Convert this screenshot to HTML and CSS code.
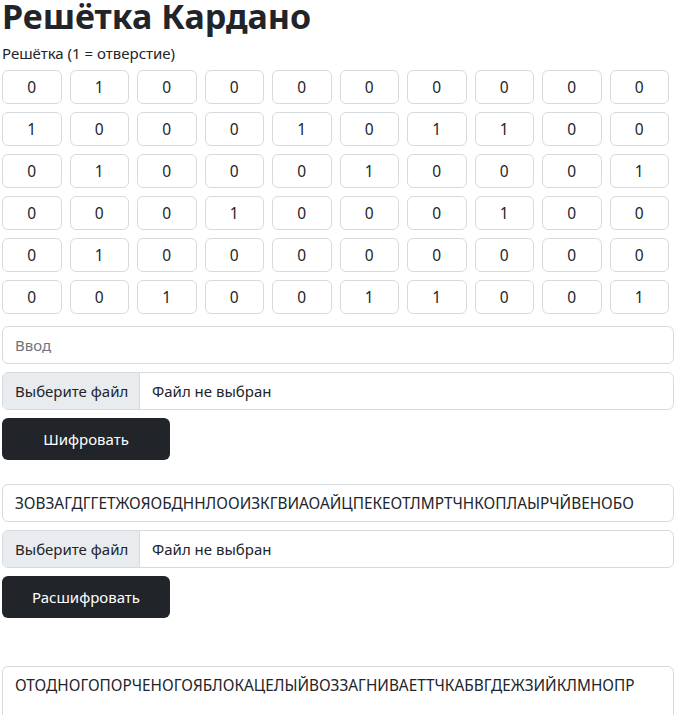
FILE: index.html
```html
<!DOCTYPE html>
<html lang="ru">
<head>
<meta charset="utf-8">
<title>Решётка Кардано</title>
<link rel="stylesheet" href="styles.css">
</head>
<body>
<div class="page">
  <h1 class="title">Решётка Кардано</h1>
  <div class="label">Решётка (1 = отверстие)</div>
  <div class="grid">
    <div class="cell">0</div><div class="cell">1</div><div class="cell">0</div><div class="cell">0</div><div class="cell">0</div><div class="cell">0</div><div class="cell">0</div><div class="cell">0</div><div class="cell">0</div><div class="cell">0</div>
    <div class="cell">1</div><div class="cell">0</div><div class="cell">0</div><div class="cell">0</div><div class="cell">1</div><div class="cell">0</div><div class="cell">1</div><div class="cell">1</div><div class="cell">0</div><div class="cell">0</div>
    <div class="cell">0</div><div class="cell">1</div><div class="cell">0</div><div class="cell">0</div><div class="cell">0</div><div class="cell">1</div><div class="cell">0</div><div class="cell">0</div><div class="cell">0</div><div class="cell">1</div>
    <div class="cell">0</div><div class="cell">0</div><div class="cell">0</div><div class="cell">1</div><div class="cell">0</div><div class="cell">0</div><div class="cell">0</div><div class="cell">1</div><div class="cell">0</div><div class="cell">0</div>
    <div class="cell">0</div><div class="cell">1</div><div class="cell">0</div><div class="cell">0</div><div class="cell">0</div><div class="cell">0</div><div class="cell">0</div><div class="cell">0</div><div class="cell">0</div><div class="cell">0</div>
    <div class="cell">0</div><div class="cell">0</div><div class="cell">1</div><div class="cell">0</div><div class="cell">0</div><div class="cell">1</div><div class="cell">1</div><div class="cell">0</div><div class="cell">0</div><div class="cell">1</div>
  </div>

  <section class="block first">
    <div class="field placeholder">Ввод</div>
    <div class="file">
      <span class="file-btn">Выберите файл</span>
      <span class="file-name">Файл не выбран</span>
    </div>
    <div class="btn">Шифровать</div>
  </section>

  <section class="block second">
    <div class="field caps">ЗОВЗАГДГГЕТЖОЯОБДННЛООИЗКГВИАОАЙЦПЕКЕОТЛМРТЧНКОПЛАЫРЧЙВЕНОБО</div>
    <div class="file">
      <span class="file-btn">Выберите файл</span>
      <span class="file-name">Файл не выбран</span>
    </div>
    <div class="btn">Расшифровать</div>
  </section>

  <div class="output caps">ОТОДНОГОПОРЧЕНОГОЯБЛОКАЦЕЛЫЙВОЗЗАГНИВАЕТТЧКАБВГДЕЖЗИЙКЛМНОПР</div>
</div>
</body>
</html>
```

FILE: styles.css
```css
html, body {
  margin: 0;
  padding: 0;
  background: #fff;
}

body {
  font-family: "Noto Sans", "Open Sans", sans-serif;
  font-size: 16px;
  line-height: 1.5;
  color: #212529;
}

.page {
  padding: 0 2px;
}

.title {
  margin: 0 0 8px 0;
  font-size: 34px;
  line-height: 33px;
  font-weight: 700;
}

.label {
  font-size: 15px;
  line-height: 24px;
  margin-bottom: 5px;
}

.grid {
  display: grid;
  grid-template-columns: repeat(10, 59.5px);
  column-gap: 8px;
  row-gap: 8px;
}

.cell {
  box-sizing: border-box;
  height: 34px;
  border: 1px solid #d6dadf;
  border-radius: 6px;
  text-align: center;
  line-height: 32px;
  font-size: 15.5px;
}

.block {
  display: flex;
  flex-direction: column;
  gap: 8px;
}

.block.first {
  margin-top: 12px;
}

.block.second {
  margin-top: 24px;
}

.field {
  box-sizing: border-box;
  height: 38px;
  width: 672px;
  border: 1px solid #d6dadf;
  border-radius: 6px;
  padding: 6px 12px;
  font-size: 15px;
  line-height: 24px;
  white-space: nowrap;
  overflow: hidden;
}

.caps {
  font-size: 15.35px;
}

.placeholder {
  color: #6c757d;
}

.file {
  box-sizing: border-box;
  height: 38px;
  width: 672px;
  border: 1px solid #d6dadf;
  border-radius: 6px;
  display: flex;
  overflow: hidden;
  font-size: 15px;
  line-height: 36px;
}

.file-btn {
  flex: none;
  box-sizing: border-box;
  width: 137px;
  padding-left: 12px;
  background: #e9ecef;
  border-right: 1px solid #d6dadf;
  white-space: nowrap;
  overflow: hidden;
}

.file-name {
  padding-left: 12px;
  white-space: nowrap;
}

.btn {
  box-sizing: border-box;
  width: 168px;
  height: 42px;
  background: #212529;
  color: #fff;
  border-radius: 6px;
  text-align: center;
  line-height: 42px;
  font-size: 15px;
}

.output {
  box-sizing: border-box;
  margin-top: 48px;
  width: 672px;
  height: 80px;
  border: 1px solid #d6dadf;
  border-radius: 6px;
  padding: 6px 12px;
  line-height: 24px;
  white-space: nowrap;
  overflow: hidden;
}
```
